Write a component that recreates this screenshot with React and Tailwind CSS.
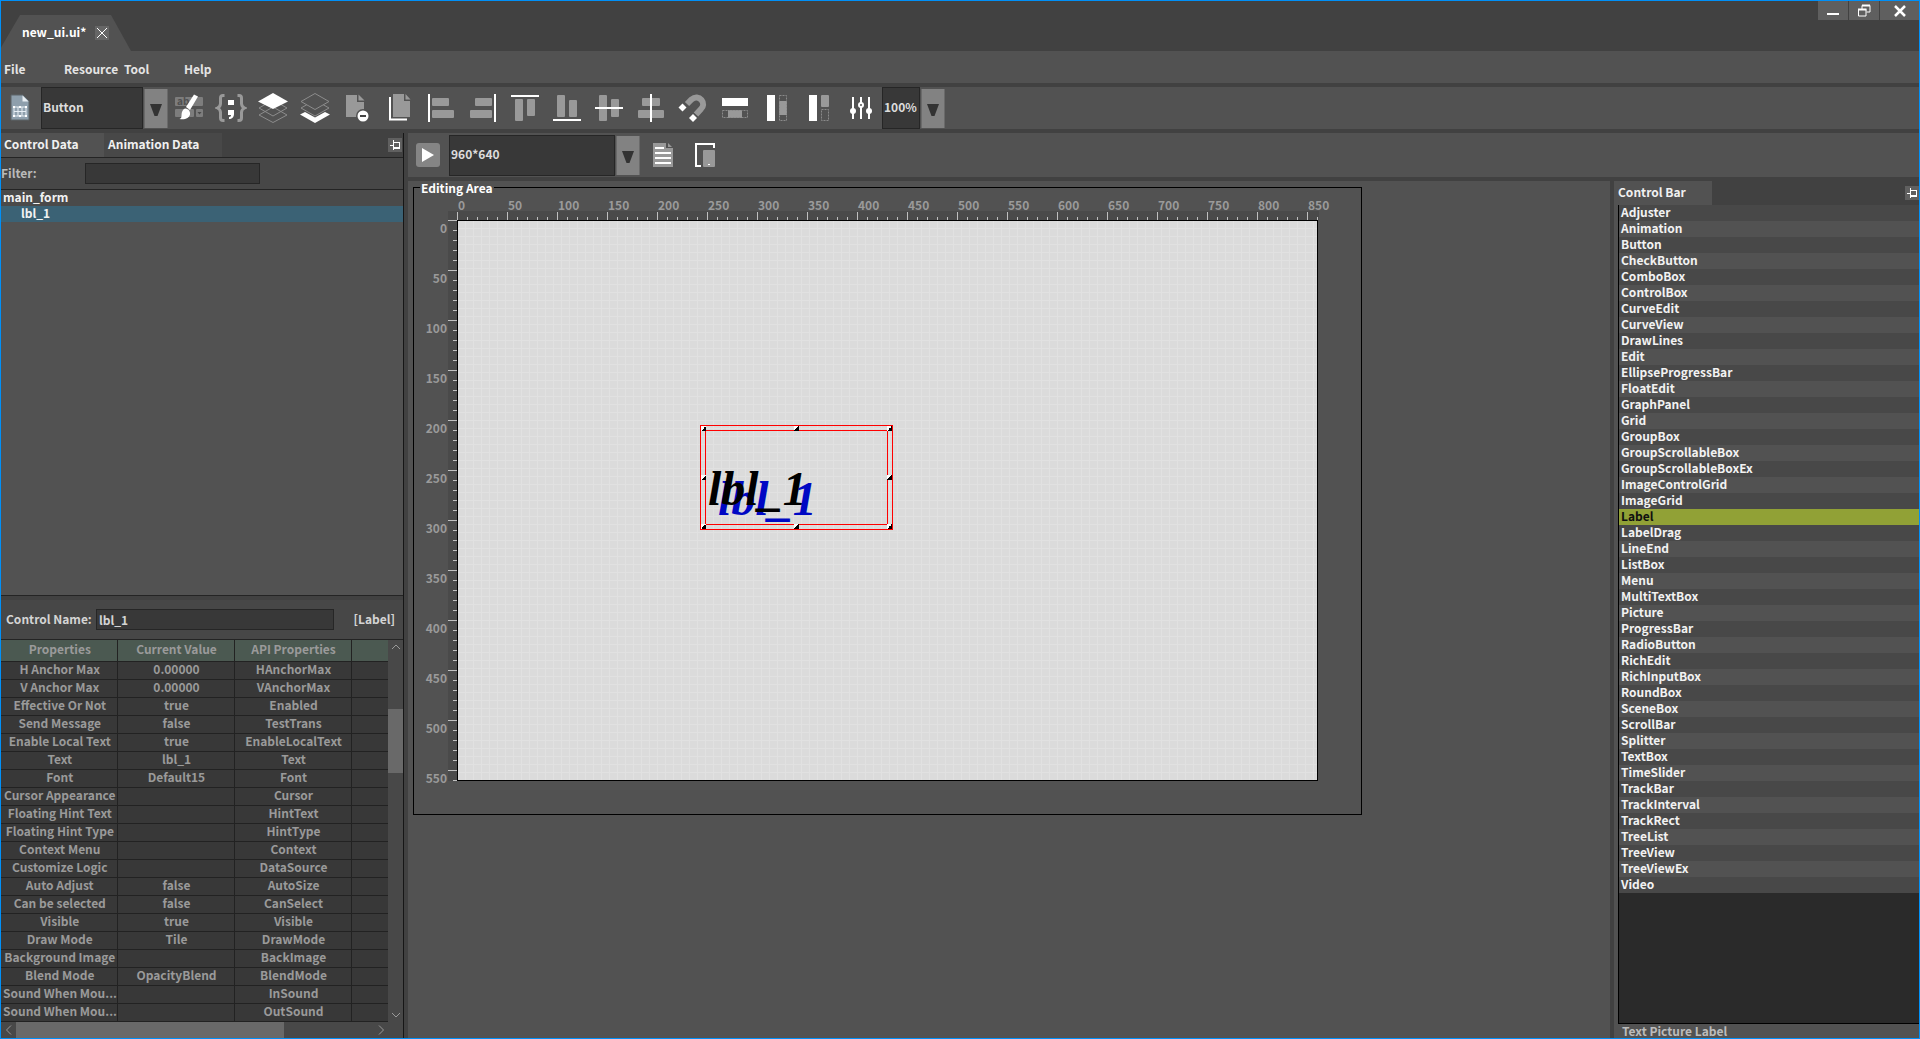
import React from 'react';

const WIDGETS = [
    'Adjuster', 'Animation', 'Button', 'CheckButton', 'ComboBox', 'ControlBox', 'CurveEdit', 'CurveView',
    'DrawLines', 'Edit', 'EllipseProgressBar', 'FloatEdit', 'GraphPanel', 'Grid', 'GroupBox',
    'GroupScrollableBox', 'GroupScrollableBoxEx', 'ImageControlGrid', 'ImageGrid', 'Label', 'LabelDrag',
    'LineEnd', 'ListBox', 'Menu', 'MultiTextBox', 'Picture', 'ProgressBar', 'RadioButton', 'RichEdit',
    'RichInputBox', 'RoundBox', 'SceneBox', 'ScrollBar', 'Splitter', 'TextBox', 'TimeSlider', 'TrackBar',
    'TrackInterval', 'TrackRect', 'TreeList', 'TreeView', 'TreeViewEx', 'Video',
];

const PROPERTIES = [
    ['H Anchor Max', '0.00000', 'HAnchorMax'],
    ['V Anchor Max', '0.00000', 'VAnchorMax'],
    ['Effective Or Not', 'true', 'Enabled'],
    ['Send Message', 'false', 'TestTrans'],
    ['Enable Local Text', 'true', 'EnableLocalText'],
    ['Text', 'lbl_1', 'Text'],
    ['Font', 'Default15', 'Font'],
    ['Cursor Appearance', '', 'Cursor'],
    ['Floating Hint Text', '', 'HintText'],
    ['Floating Hint Type', '', 'HintType'],
    ['Context Menu', '', 'Context'],
    ['Customize Logic', '', 'DataSource'],
    ['Auto Adjust', 'false', 'AutoSize'],
    ['Can be selected', 'false', 'CanSelect'],
    ['Visible', 'true', 'Visible'],
    ['Draw Mode', 'Tile', 'DrawMode'],
    ['Background Image', '', 'BackImage'],
    ['Blend Mode', 'OpacityBlend', 'BlendMode'],
    ['Sound When Mou...', '', 'InSound'],
    ['Sound When Mou...', '', 'OutSound'],
];

const G = '#999999';
const W = '#ffffff';

// every tool icon is drawn on a 32x32 grid
const TOOLS = [
    {
        name: 'Style brush',
        icon: (
            <>
                <rect x="2" y="5" width="28" height="9" rx="1" fill="#7d7d7d" />
                <rect x="2" y="17" width="19" height="8" rx="1" fill="#7d7d7d" />
                <rect x="23" y="17" width="7" height="8" rx="1" fill="#7d7d7d" />
                <path d="M24.5 20h4l-2 2.5z" fill="#4a4a4a" />
                <text x="4" y="13" fontSize="10" fontWeight="bold" fill="#505050">ab</text>
                <path d="M21 2.5l4 2-8 13.500-4-3z" fill={W} />
                <path d="M12.500 16.500c3 .5 5 3 4.500 6-.8 3.500-5 5.500-10.500 4.500 3-1 1.500-4 2.500-7 .6-2 2-3.300 3.500-3.500z" fill={W} />
            </>
        ),
    },
    {
        name: 'Script',
        icon: (
            <>
                <path d="M9.500 3.500H8c-2 0-2.500 1-2.500 2.500v5.500c0 2.500-1 3.500-3 4.500 2 1 3 2 3 4.500V26c0 1.500.5 2.500 2.500 2.500h1.500M22.500 3.500H24c2 0 2.500 1 2.500 2.500v5.500c0 2.500 1 3.500 3 4.500-2 1-3 2-3 4.500V26c0 1.500-.5 2.500-2.500 2.500h-1.500" fill="none" stroke={G} strokeWidth="3" />
                <rect x="13" y="8" width="6" height="5" fill={W} />
                <path d="M13 18h6v4c0 3-2 5-5 5v-2c1.500 0 2-1 2-2h-3z" fill={W} />
            </>
        ),
    },
    {
        name: 'Bring to front',
        icon: (
            <>
                <path d="M2 23l14-8 14 8-14 7.500zM2 16l14-8 14 8-14 8z" fill="#525252" stroke="#8c8c8c" />
                <path d="M16 1l15 8.500L16 17 1 9.500z" fill={W} />
            </>
        ),
    },
    {
        name: 'Send to back',
        icon: (
            <>
                <path d="M1 22.500l5-2.500 10 5.500L26 20l5 2.500L16 31z" fill={W} />
                <path d="M2 16l14-8 14 8-14 8z" fill="#525252" stroke="#8c8c8c" />
                <path d="M2 9.500L16 1.500l14 8-14 8z" fill="#525252" stroke="#8c8c8c" />
            </>
        ),
    },
    {
        name: 'Remove page',
        icon: (
            <>
                <path d="M5 3h11v7h7v15H5z" fill={G} />
                <path d="M17.500 2.500l6 6h-6z" fill={G} />
                <circle cx="22" cy="24" r="7" fill="#525252" />
                <circle cx="22" cy="24" r="5.500" fill={W} />
                <rect x="19" y="23" width="6" height="2" fill="#444444" />
            </>
        ),
    },
    {
        name: 'Copy page',
        icon: (
            <>
                <path d="M10 2h11v7h6v16H10z" fill={G} />
                <path d="M22.500 2l5 5.500h-5z" fill={G} />
                <path d="M7 5v22.500h17" fill="none" stroke={W} strokeWidth="2" />
            </>
        ),
    },
    {
        name: 'Align left',
        icon: (
            <>
                <rect x="7" y="6" width="17" height="8" rx="1" fill={G} />
                <rect x="7" y="18" width="22" height="8" rx="1" fill={G} />
                <rect x="3" y="2" width="2" height="28" fill={W} />
            </>
        ),
    },
    {
        name: 'Align right',
        icon: (
            <>
                <rect x="8" y="6" width="17" height="8" rx="1" fill={G} />
                <rect x="3" y="18" width="22" height="8" rx="1" fill={G} />
                <rect x="27" y="2" width="2" height="28" fill={W} />
            </>
        ),
    },
    {
        name: 'Align top',
        icon: (
            <>
                <rect x="6" y="7" width="8" height="22" rx="1" fill={G} />
                <rect x="18" y="7" width="8" height="17" rx="1" fill={G} />
                <rect x="2" y="3" width="28" height="2" fill={W} />
            </>
        ),
    },
    {
        name: 'Align bottom',
        icon: (
            <>
                <rect x="6" y="3" width="8" height="22" rx="1" fill={G} />
                <rect x="18" y="8" width="8" height="17" rx="1" fill={G} />
                <rect x="2" y="27" width="28" height="2" fill={W} />
            </>
        ),
    },
    {
        name: 'Align middle',
        icon: (
            <>
                <rect x="6" y="3" width="8" height="26" rx="1" fill={G} />
                <rect x="18" y="7" width="8" height="18" rx="1" fill={G} />
                <rect x="2" y="15" width="28" height="2" fill={W} />
            </>
        ),
    },
    {
        name: 'Align center',
        icon: (
            <>
                <rect x="7" y="6" width="18" height="8" rx="1" fill={G} />
                <rect x="3" y="18" width="26" height="8" rx="1" fill={G} />
                <rect x="15" y="2" width="2" height="28" fill={W} />
            </>
        ),
    },
    {
        name: 'Snap',
        icon: (
            <>
                <path d="M10 12l4.500-4.500C18 4.500 22 5 24.500 8c2.500 3 2 6.500-.5 9l-5 5.500" fill="none" stroke={G} strokeWidth="6" />
                <path d="M5.500 11.500l4 4-4 4-4-4zM16 22l4 4-4 4-4-4z" fill={W} />
            </>
        ),
    },
    {
        name: 'Same width',
        icon: (
            <>
                <rect x="3" y="6" width="26" height="8" fill={W} />
                <rect x="9" y="18" width="14" height="8" fill={G} />
                <rect x="3.500" y="18.500" width="25" height="7" fill="none" stroke="#8a8a8a" strokeDasharray="2 1" />
            </>
        ),
    },
    {
        name: 'Same height',
        icon: (
            <>
                <rect x="6" y="3" width="8" height="26" fill={W} />
                <rect x="18" y="9" width="8" height="14" fill={G} />
                <rect x="18.500" y="3.500" width="7" height="25" fill="none" stroke="#8a8a8a" strokeDasharray="2 1" />
            </>
        ),
    },
    {
        name: 'Fit height',
        icon: (
            <>
                <rect x="6" y="3" width="8" height="26" fill={W} />
                <rect x="18" y="3" width="8" height="12" rx="1" fill={G} />
                <rect x="18.500" y="17.500" width="7" height="11" fill="none" stroke="#8a8a8a" strokeDasharray="2 1" />
            </>
        ),
    },
    {
        name: 'Settings',
        icon: (
            <>
                <path d="M8 5v22M16 5v22M24 5v22" stroke={W} strokeWidth="2" />
                <circle cx="8" cy="19" r="3" fill={W} />
                <circle cx="24" cy="19" r="3" fill={W} />
                <circle cx="16" cy="13" r="2" fill="#525252" stroke={W} strokeWidth="2" />
            </>
        ),
    },
];

const Icon = ({ size = 32, children }) => (
    <svg width={size} height={size} viewBox={`0 0 ${size} ${size}`} className="block shrink-0">
        {children}
    </svg>
);

const Combo = ({ label, value, className }) => (
    <div className="flex items-center self-stretch">
        <select
            aria-label={label}
            defaultValue={value}
            className={`appearance-none self-stretch rounded-none border border-[#262626] bg-[#383838] pb-[2px] pl-px text-[#dcdcdc] outline-none ${className}`}
        >
            <option>{value}</option>
        </select>
        <span className="ml-px flex h-[39px] w-6 items-center justify-center border-x border-[#6a6a6a] bg-[#828282] pt-1">
            <svg width="12" height="12" viewBox="0 0 12 12">
                <path d="M0 0h12L7.500 12h-3z" fill="#333333" />
            </svg>
        </span>
    </div>
);

const PinButton = () => (
    <button type="button" aria-label="Pin panel" className="flex h-[14px] w-[14px] shrink-0 items-center justify-center bg-[#606060]">
        <Icon size={14}>
            <path d="M2 7h3M5 2v10M5 4h6v6H5M5 9h6" fill="none" stroke={W} shapeRendering="crispEdges" />
        </Icon>
    </button>
);

const TitleBar = () => (
    <header className="flex h-[50px] shrink-0 items-end justify-between bg-[#414141]">
        <div className="flex h-9 w-[130px] items-center bg-[#525252] pl-[21px] [clip-path:polygon(19px_0,110px_0,130px_100%,0_100%,0_90%)]">
            <span className="w-[73px] pb-[2px] text-white">new_ui.ui*</span>
            <button type="button" aria-label="Close file" className="h-[14px] w-[14px] bg-[#666666]">
                <Icon size={14}>
                    <path d="M2 2l10 10M12 2L2 12" stroke={W} />
                </Icon>
            </button>
        </div>
        <div className="flex gap-px self-start">
            <button type="button" aria-label="Minimize" className="flex h-[19px] w-[30px] items-end justify-center bg-[#5f5f5f] pb-[5px]">
                <span className="h-[2px] w-3 bg-white" />
            </button>
            <button type="button" aria-label="Restore" className="flex h-[19px] w-[30px] items-center justify-center bg-[#5f5f5f]">
                <Icon size={14}>
                    <path d="M5 5V1.500h8V8h-3.500M1 5.500h8V12H1.500V5" fill="none" stroke={W} />
                    <path d="M5 1.500h8M1 5.500h8.500" stroke={W} strokeWidth="2" />
                </Icon>
            </button>
            <button type="button" aria-label="Close" className="flex h-[19px] w-[39px] items-center justify-center bg-[#5f5f5f]">
                <Icon size={14}>
                    <path d="M2 2l10 10M12 2L2 12" stroke={W} strokeWidth="2.500" />
                </Icon>
            </button>
        </div>
    </header>
);

const MenuBar = () => (
    <nav className="flex h-8 shrink-0 items-center bg-[#525252] pt-1 pl-[3px] text-[#e4e4e4]">
        <button type="button" className="w-[60px] text-left">File</button>
        <button type="button" className="w-[60px] text-left">Resource</button>
        <button type="button" className="w-[60px] text-left">Tool</button>
        <button type="button" className="w-[60px] text-left">Help</button>
    </nav>
);

const Toolbar = () => (
    <div className="mt-1 flex h-[42px] shrink-0 items-center bg-[#525252]">
        <button type="button" aria-label="New form" className="flex w-10 pl-[3px]">
            <Icon>
                <path d="M7 3h12l6 6v19H7z" fill="#8e9fac" stroke="#5c6468" />
                <path d="M18.500 3.500l6 6h-6z" fill="#e8eef2" />
                <path d="M10 15h12v9H10zM14 15v9M18 15v9M10 19.500h12" fill="none" stroke="#e6eef4" />
                <path d="M9 14h2v2H9zM15 14h2v2h-2zM21 14h2v2h-2zM9 23h2v2H9zM15 23h2v2h-2zM21 23h2v2h-2z" fill={W} />
            </Icon>
        </button>
        <Combo label="Control type" value="Button" className="w-[102px]" />
        <div className="flex">
            {TOOLS.map(tool => (
                <button key={tool.name} type="button" aria-label={tool.name} className="flex w-[42px] justify-center">
                    <Icon>{tool.icon}</Icon>
                </button>
            ))}
        </div>
        <Combo label="Zoom" value="100%" className="w-[38px]" />
    </div>
);

const ControlTree = () => (
    <section className="flex min-h-0 flex-1 flex-col">
        <div className="flex h-6 shrink-0 items-center bg-[#414141]">
            <button type="button" className="h-6 w-[103px] bg-[#525252] pb-[2px] pl-[3px] text-left text-[#f0f0f0]">Control Data</button>
            <button type="button" className="h-6 w-[118px] bg-[#484848] pb-[2px] pl-1 text-left text-[#f0f0f0]">Animation Data</button>
            <span className="ml-auto pr-px"><PinButton /></span>
        </div>
        <div className="flex h-8 shrink-0 items-center border-t border-[#242424] bg-[#474747]">
            <label htmlFor="filter" className="w-[84px] pb-[2px] text-[#bababa]">Filter:</label>
            <input id="filter" type="text" className="h-[21px] w-[175px] border border-[#262626] bg-[#383838] px-1 text-[#dcdcdc] outline-none" />
        </div>
        <ul className="min-h-0 flex-1 border-y border-[#242424] bg-[#525252] text-[#f2f2f2]">
            <li className="h-4 bg-[#4a4a4a] pl-[2px] leading-[14px]">main_form</li>
            <li className="h-4 bg-[#3b6275] pl-5 leading-[14px]">lbl_1</li>
        </ul>
    </section>
);

const PropertyPanel = () => (
    <section className="flex shrink-0 flex-col border-t-4 border-[#414141] bg-[#474747]">
        <div className="flex h-[39px] items-center pl-[5px] text-[#d4d4d4]">
            <label htmlFor="control-name" className="w-[90px] pb-px whitespace-nowrap">Control Name:</label>
            <input
                id="control-name"
                type="text"
                defaultValue="lbl_1"
                className="h-[21px] w-[238px] border border-[#262626] bg-[#383838] px-[2px] pb-px outline-none"
            />
            <span className="ml-auto pr-2 pb-px">[Label]</span>
        </div>
        <div className="flex border-t border-[#242424]">
            <div className="h-[382px] flex-1 overflow-hidden bg-[#383838]">
                <table className="w-full table-fixed border-collapse text-center text-[#9a9a9a]">
                    <colgroup>
                        <col className="w-[116px]" />
                        <col className="w-[117px]" />
                        <col className="w-[117px]" />
                        <col />
                    </colgroup>
                    <thead>
                        <tr className="h-[21px] bg-[#4b5951]">
                            {['Properties', 'Current Value', 'API Properties', ''].map((title, i) => (
                                <th key={i} className="border-r border-b border-[#222222] pt-0 pr-0 pb-[2px] pl-[2px] leading-[14px] last:border-r-0">{title}</th>
                            ))}
                        </tr>
                    </thead>
                    <tbody>
                        {PROPERTIES.map((row, i) => (
                            <tr key={i} className="h-[18px]">
                                {[...row, ''].map((cell, j) => (
                                    <td key={j} className="whitespace-nowrap border-r border-b border-[#222222] pt-0 pr-0 pb-[2px] pl-[2px] leading-[14px] last:border-r-0">{cell}</td>
                                ))}
                            </tr>
                        ))}
                    </tbody>
                </table>
            </div>
            <div className="flex w-[15px] flex-col bg-[#484848]">
                <svg width="15" height="15" viewBox="0 0 15 15">
                    <path d="M4 9l4-4 4 4" fill="none" stroke={G} />
                </svg>
                <div className="mt-[54px] h-16 bg-[#696969]" />
                <svg width="15" height="15" viewBox="0 0 15 15" className="mt-auto">
                    <path d="M4 6l4 4 4-4" fill="none" stroke={G} />
                </svg>
            </div>
        </div>
        <div className="flex h-4 items-stretch bg-[#484848]">
            <svg width="15" height="16" viewBox="0 0 15 16">
                <path d="M10 3.500L5.500 8l4.500 4.500" fill="none" stroke={G} />
            </svg>
            <div className="w-[268px] bg-[#696969]" />
            <svg width="15" height="16" viewBox="0 0 15 16" className="mr-[15px] ml-auto">
                <path d="M6 3.500l4.500 4.500L6 12.500" fill="none" stroke={G} />
            </svg>
        </div>
    </section>
);

const ViewBar = () => (
    <div className="flex h-11 shrink-0 items-center bg-[#525252] pl-2">
        <button type="button" aria-label="Run" className="mr-[9px] flex h-6 w-6 items-center justify-center rounded-[3px] bg-[#858585]">
            <Icon size={24}>
                <path d="M6 5l12 7-12 7z" fill={W} />
            </Icon>
        </button>
        <div className="mr-[7px] flex h-[41px]">
            <Combo label="Resolution" value="960*640" className="w-[166px]" />
        </div>
        <button type="button" aria-label="Form list" className="mr-[10px]">
            <Icon>
                <path d="M6 4h13v5h7v19H6z" fill={G} />
                <path d="M21 4l4 4h-4z" fill={G} />
                <path d="M8 9h9M8 14h16M8 19h16M8 24h16" stroke={W} strokeWidth="2" />
            </Icon>
        </button>
        <button type="button" aria-label="Device orientation">
            <Icon>
                <path d="M12 27H7V5h18v4" fill="none" stroke={W} strokeWidth="2" />
                <rect x="14" y="11" width="12" height="17" rx="1" fill={G} />
                <rect x="19" y="25" width="2" height="1" fill={W} />
            </Icon>
        </button>
    </div>
);

const range = n => Array.from({ length: n }, (_, i) => i);

const HorizontalRuler = () => (
    <div className="ml-11">
        <div className="flex h-[17px] leading-[22px] text-[#9a9a9a]">
            {range(18).map(i => (
                <span key={i} className={`shrink-0 ${i === 17 ? 'w-[10px]' : 'w-[50px]'}`}>{i * 50}</span>
            ))}
        </div>
        <div className="-ml-[10px] flex h-[9px] w-[871px] items-end bg-[#4a4a4a] pl-[9px]">
            {range(87).map(i => (
                <span key={i} className={`shrink-0 border-l border-[#c0c0c0] ${i === 86 ? 'w-px' : 'w-[10px]'} ${i % 5 === 0 ? 'h-2' : 'h-[3px]'}`} />
            ))}
        </div>
    </div>
);

const VerticalRuler = () => (
    <div className="flex w-[43px] shrink-0">
        <div className="flex w-[34px] flex-col pr-px text-right leading-4 text-[#9a9a9a]">
            {range(12).map(i => (
                <span key={i} className={i === 11 ? 'h-[11px]' : 'h-[50px]'}>{i * 50}</span>
            ))}
        </div>
        <div className="flex h-[561px] w-[9px] flex-col items-end bg-[#4a4a4a]">
            {range(57).map(i => (
                <span key={i} className={`shrink-0 border-t border-[#c0c0c0] ${i === 56 ? 'h-px' : 'h-[10px]'} ${i % 5 === 0 ? 'w-[9px]' : 'w-1'}`} />
            ))}
        </div>
    </div>
);

const HANDLES = [
    'left-0 top-0', 'left-[93px] top-0', 'right-0 top-0',
    'left-0 top-[49px]', 'right-0 top-[49px]',
    'left-0 bottom-0', 'left-[93px] bottom-0', 'right-0 bottom-0',
];

const SelectedLabel = () => (
    <div className="absolute top-[204px] left-[242px] h-[105px] w-[193px] border border-[#ff0000] p-1">
        <div className="flex h-full items-end border border-[#ff0000] pl-[2px]">
            <span className="font-['Liberation_Serif',serif] text-[48px] leading-[70px] italic text-black [text-shadow:10px_10px_0_#0008c4]">
                lbl_1
            </span>
        </div>
        {HANDLES.map(pos => (
            <span key={pos} className={`absolute h-[5px] w-[5px] bg-[linear-gradient(135deg,#ffffff_50%,#000000_50%)] ${pos}`} />
        ))}
    </div>
);

const EditingArea = () => (
    <main className="min-w-0 flex-1 overflow-hidden bg-[#525252] pl-[5px]">
        <fieldset className="w-fit border border-black pr-[42px] pb-[33px]">
            <legend className="ml-[6px] h-[13px] px-px leading-[14px] text-white">Editing Area</legend>
            <HorizontalRuler />
            <div className="flex">
                <VerticalRuler />
                <div className="relative h-[561px] w-[861px] border border-black bg-[#dbdbdb] bg-[linear-gradient(#e1e1e1_1px,transparent_1px),linear-gradient(90deg,#e1e1e1_1px,transparent_1px)] bg-[size:8px_8px] bg-[position:7px_7px]">
                    <SelectedLabel />
                </div>
            </div>
        </fieldset>
    </main>
);

const ControlBar = () => (
    <aside className="flex w-[309px] shrink-0 flex-col border-l-4 border-[#414141] bg-[#525252]">
        <div className="flex h-6 shrink-0 items-center bg-[#414141]">
            <h2 className="flex h-6 w-[98px] items-center bg-[#525252] pb-[2px] pl-1 text-[#f0f0f0]">Control Bar</h2>
            <span className="ml-auto"><PinButton /></span>
        </div>
        <ul className="ml-1 min-h-0 flex-1 overflow-hidden border-b border-l border-black bg-[#2a2a2a] text-[#f2f2f2]">
            {WIDGETS.map(name => (
                <li
                    key={name}
                    className={`h-4 pl-[2px] leading-[14px] ${name === 'Label' ? 'bg-[#91a136] text-[#101010]' : 'odd:bg-[#484848] even:bg-[#525252]'}`}
                >
                    {name}
                </li>
            ))}
        </ul>
        <p className="h-[14px] shrink-0 pl-2 leading-[14px] text-[#bcbcbc]">Text Picture Label</p>
    </aside>
);

const App = () => (
    <div className="flex h-screen flex-col border border-[#0090f8] bg-[#414141] font-['Noto_Sans_CJK_SC',sans-serif] text-[12px] leading-4 font-bold">
        <TitleBar />
        <MenuBar />
        <Toolbar />
        <div className="mt-1 flex min-h-0 flex-1">
            <div className="flex w-[403px] shrink-0 flex-col border-r border-[#161616]">
                <ControlTree />
                <PropertyPanel />
            </div>
            <div className="ml-1 flex min-w-0 flex-1 flex-col">
                <ViewBar />
                <div className="mt-1 flex min-h-0 flex-1">
                    <EditingArea />
                    <ControlBar />
                </div>
            </div>
        </div>
    </div>
);

export default App;
